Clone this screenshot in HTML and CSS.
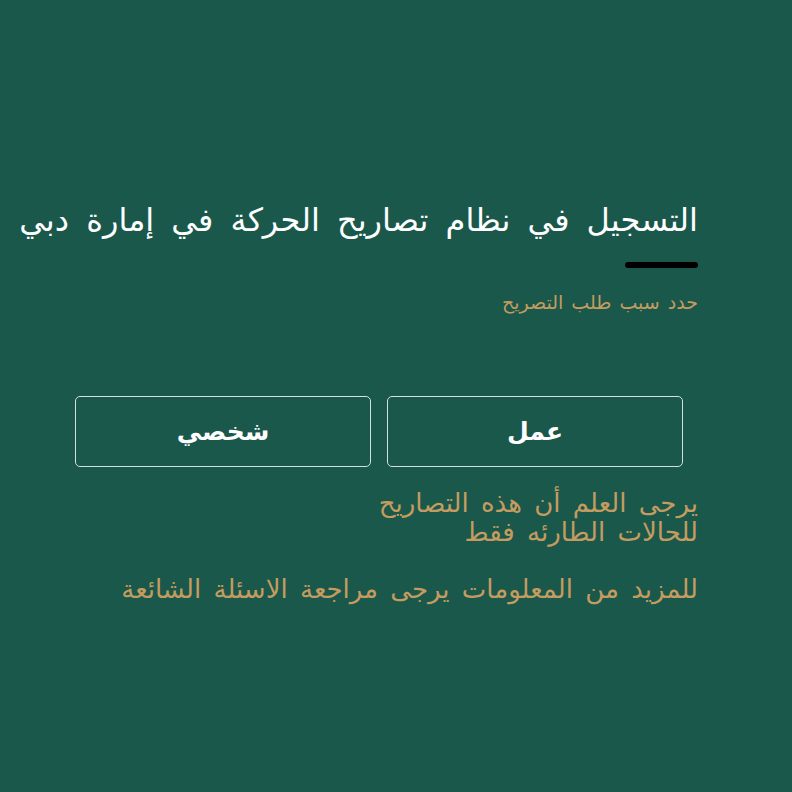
FILE: index.html
```html
<!DOCTYPE html>
<html lang="ar" dir="rtl">
<head>
<meta charset="utf-8">
<link rel="stylesheet" href="styles.css">
</head>
<body>
<main class="page">
  <h1 class="title">التسجيل في نظام تصاريح الحركة في إمارة دبي</h1>
  <div class="bar"></div>
  <p class="subtitle">حدد سبب طلب التصريح</p>
  <div class="choices">
    <button class="choice">عمل</button>
    <button class="choice">شخصي</button>
  </div>
  <p class="note">يرجى العلم أن هذه التصاريح<br>للحالات الطارئه فقط</p>
  <p class="note more">للمزيد من المعلومات يرجى مراجعة الاسئلة الشائعة</p>
</main>
</body>
</html>
```

FILE: styles.css
```css
html, body {
  margin: 0;
  padding: 0;
  background: #1a584c;
  height: 100%;
}
body {
  font-family: "DejaVu Sans", "Noto Sans", sans-serif;
  color: #ffffff;
}
.page {
  direction: rtl;
  padding: 198px 94px 0 20px;
  display: flex;
  flex-direction: column;
  align-items: stretch;
}
.title {
  margin: 0;
  font-size: 32px;
  font-weight: normal;
  line-height: 44px;
  word-spacing: 7px;
  color: #ffffff;
  white-space: nowrap;
}
.bar {
  width: 73px;
  height: 6px;
  border-radius: 3px;
  background: #000000;
  margin-top: 20px;
}
.subtitle {
  margin: 22px 0 0;
  font-size: 19px;
  line-height: 24px;
  word-spacing: 2px;
  color: #c49c5f;
}
.choices {
  display: flex;
  gap: 16px;
  margin: 82px 15px 0 55px;
}
.choice {
  flex: 1;
  height: 71px;
  background: transparent;
  border: 1.5px solid #d5e0dc;
  border-radius: 5px;
  color: #ffffff;
  font-family: inherit;
  font-size: 25px;
  font-weight: bold;
}
.note {
  margin: 22px 0 0;
  font-size: 26px;
  line-height: 29px;
  word-spacing: 4px;
  color: #c49c5f;
}
.note.more {
  margin-top: 28px;
}
```
